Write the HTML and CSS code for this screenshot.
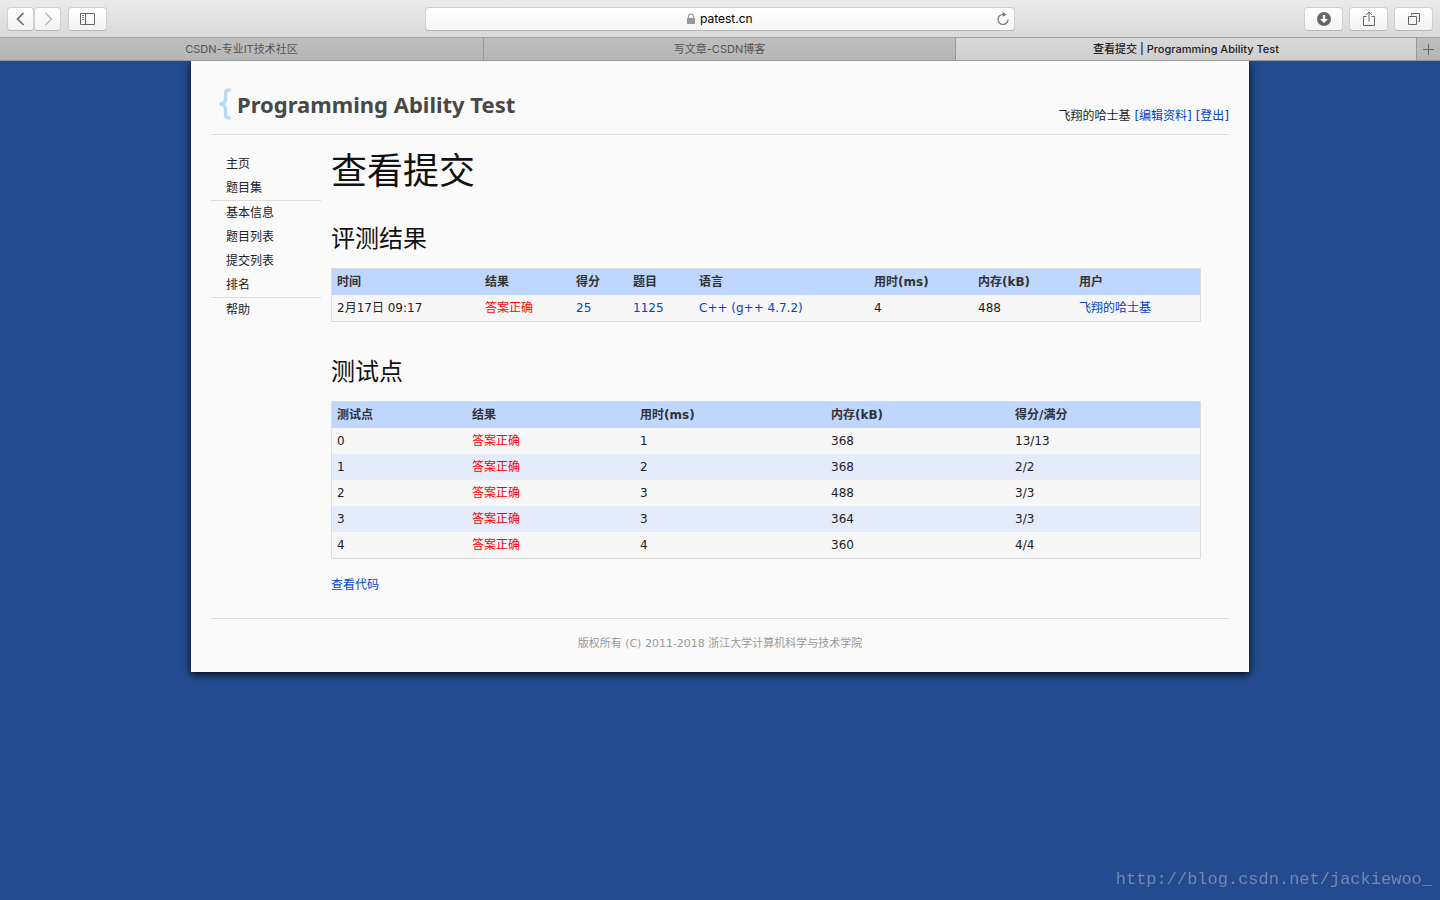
FILE: index.html
```html
<!DOCTYPE html>
<html lang="zh-CN">
<head>
<meta charset="utf-8">
<title>查看提交 | Programming Ability Test</title>
<link rel="stylesheet" href="styles.css">
</head>
<body>
<header class="browser">
  <div class="toolbar">
    <div class="tools">
      <div class="history">
        <button class="tool" type="button" aria-label="后退"><svg width="26" height="22" viewBox="0 0 26 22"><path d="M15.500 5L9.500 11l6 6" fill="none" stroke="#666" stroke-width="1.600"/></svg></button>
        <button class="tool" type="button" aria-label="前进"><svg width="26" height="22" viewBox="0 0 26 22"><path d="M10.500 5l6 6-6 6" fill="none" stroke="#bbb" stroke-width="1.600"/></svg></button>
      </div>
      <button class="tool wide" type="button" aria-label="边栏"><svg width="16" height="12" viewBox="0 0 16 12"><path d="M.5.500h14v11H.5zM5.500.500v11" fill="none" stroke="#666"/><path d="M2 2.500h2M2 4.500h2M2 6.500h2" stroke="#888"/></svg></button>
    </div>
    <form class="address">
      <div class="site">
        <svg width="10" height="12" viewBox="0 0 10 12"><rect x="1" y="5" width="8" height="6" rx=".5" fill="#999"/><path d="M2.500 5V3.500a2.500 2.500 0 0 1 5 0V5" fill="none" stroke="#999" stroke-width="1.200"/></svg>
        <input class="url" type="text" aria-label="网址" value="patest.cn">
      </div>
      <button class="reload" type="button" aria-label="重新载入"><svg width="14" height="14" viewBox="0 0 14 14"><path d="M7 2.500a5 5 0 1 0 5 5" fill="none" stroke="#777" stroke-width="1.200"/><path d="M6.500 0l4 2.500-4 2.500z" fill="#777"/></svg></button>
    </form>
    <div class="tools end">
      <button class="tool wide" type="button" aria-label="下载"><svg width="14" height="14" viewBox="0 0 14 14"><circle cx="7" cy="7" r="7" fill="#666"/><path d="M5.800 3h2.400v4H11l-4 4-4-4h2.800z" fill="#fff"/></svg></button>
      <button class="tool wide" type="button" aria-label="分享"><svg width="14" height="16" viewBox="0 0 14 16"><path d="M4.500 5.500h-3v9h11v-9h-3M7 10.500V1M4 4l3-3 3 3" fill="none" stroke="#666"/></svg></button>
      <button class="tool wide" type="button" aria-label="显示所有标签页"><svg width="14" height="14" viewBox="0 0 14 14"><path d="M1.500 4.500h8v8h-8zM4.500 3V1.500h8v8H11" fill="none" stroke="#666"/></svg></button>
    </div>
  </div>
  <nav class="tabs">
    <button class="tab" type="button">CSDN-专业IT技术社区</button>
    <button class="tab" type="button">写文章-CSDN博客</button>
    <button class="tab active" type="button">查看提交 | Programming Ability Test</button>
    <button class="tab add" type="button" aria-label="新标签页"><svg width="11" height="11" viewBox="0 0 11 11"><path d="M0 5.500h11M5.500 0v11" stroke="#666"/></svg></button>
  </nav>
</header>
<div class="page">
  <header class="head">
    <a class="logo" href="#"><svg width="12" height="32" viewBox="0 0 12 32"><path d="M11.500 2H10Q6.500 2 6.500 5.500V11Q6.500 16 .5 16q6 0 6 5v5.500Q6.500 30 10 30h1.500" fill="none" stroke="#b9dcf3" stroke-width="3.400"/></svg>Programming Ability Test</a>
    <div class="account">飞翔的哈士基 <a href="#">[编辑资料]</a> <a href="#">[登出]</a></div>
  </header>
  <div class="body">
    <nav class="side">
      <ul><li><a href="#">主页</a></li><li><a href="#">题目集</a></li></ul>
      <ul><li><a href="#">基本信息</a></li><li><a href="#">题目列表</a></li><li><a href="#">提交列表</a></li><li><a href="#">排名</a></li></ul>
      <ul><li><a href="#">帮助</a></li></ul>
    </nav>
    <main class="content">
      <h1>查看提交</h1>
      <h2>评测结果</h2>
      <table class="grid summary">
        <thead><tr><th class="c-time">时间</th><th class="c-result">结果</th><th class="c-score">得分</th><th class="c-problem">题目</th><th class="c-lang">语言</th><th class="c-used">用时(ms)</th><th class="c-memory">内存(kB)</th><th>用户</th></tr></thead>
        <tbody><tr><td>2月17日 09:17</td><td class="ok">答案正确</td><td><a href="#">25</a></td><td><a href="#">1125</a></td><td><a href="#">C++ (g++ 4.7.2)</a></td><td>4</td><td>488</td><td><a href="#">飞翔的哈士基</a></td></tr></tbody>
      </table>
      <h2>测试点</h2>
      <table class="grid cases">
        <thead><tr><th class="k-id">测试点</th><th class="k-result">结果</th><th class="k-used">用时(ms)</th><th class="k-memory">内存(kB)</th><th>得分/满分</th></tr></thead>
        <tbody>
          <tr><td>0</td><td class="ok">答案正确</td><td>1</td><td>368</td><td>13/13</td></tr>
          <tr><td>1</td><td class="ok">答案正确</td><td>2</td><td>368</td><td>2/2</td></tr>
          <tr><td>2</td><td class="ok">答案正确</td><td>3</td><td>488</td><td>3/3</td></tr>
          <tr><td>3</td><td class="ok">答案正确</td><td>3</td><td>364</td><td>3/3</td></tr>
          <tr><td>4</td><td class="ok">答案正确</td><td>4</td><td>360</td><td>4/4</td></tr>
        </tbody>
      </table>
      <p class="source"><a href="#">查看代码</a></p>
    </main>
  </div>
  <footer class="foot">版权所有 (C) 2011-2018 浙江大学计算机科学与技术学院</footer>
</div>
<div class="watermark">http://blog.csdn.net/jackiewoo_</div>
</body>
</html>
```
FILE: styles.css
```css
* { box-sizing: border-box; }
body {
  margin: 0;
  min-height: 100vh;
  background: #234b8f;
  color: #222;
  font: 12px/24px "DejaVu Sans", "Noto Sans CJK SC", sans-serif;
}
a { color: #04c; text-decoration: none; }
button, input { font: inherit; color: inherit; border: 0; padding: 0; background: none; }
svg { display: block; flex: none; }

.browser { font: 11px/20px Inter, "Noto Sans CJK SC", sans-serif; }
.toolbar {
  display: grid;
  grid-template-columns: 1fr 590px 1fr;
  align-items: center;
  height: 38px;
  padding: 0 7px;
  background: linear-gradient(#ebebeb, #d9d9d9);
  border-bottom: 1px solid #a4a4a4;
}
.tools { display: flex; gap: 7px; }
.tools.end { justify-content: flex-end; gap: 6px; }
.history { display: flex; }
.tool {
  display: flex;
  align-items: center;
  justify-content: center;
  width: 27px;
  height: 24px;
  border: 1px solid #cfcfcf;
  border-bottom-color: #b8b8b8;
  border-radius: 4px;
  background: linear-gradient(#fff, #f3f3f3);
}
.tool.wide { width: 39px; }
.address {
  display: flex;
  align-items: center;
  height: 24px;
  margin: 0;
  padding: 0 4px 0 20px;
  border: 1px solid #cfcfcf;
  border-bottom-color: #b8b8b8;
  border-radius: 4px;
  background: linear-gradient(#fff, #f6f6f6);
}
.site { display: flex; flex: 1; justify-content: center; align-items: center; gap: 4px; }
.url { width: 56px; color: #000; font-size: 12px; outline: 0; }
.reload { width: 14px; }
.tabs {
  display: grid;
  grid-template-columns: 484fr 472fr 461fr 23px;
  height: 23px;
  border-bottom: 1px solid #999;
}
.tab {
  overflow: hidden;
  white-space: nowrap;
  color: #555;
  background: linear-gradient(#bfbfbf, #b5b5b5);
  border-right: 1px solid #999;
}
.tab.active { color: #222; font-weight: 500; background: linear-gradient(#d9d9d9, #cfcfcf); }
.tab.add { display: flex; align-items: center; justify-content: center; border-right: 0; }

.page {
  max-width: 1058px;
  margin: 0 auto;
  padding: 0 20px 16px;
  background: #fafafa;
  box-shadow: 0 2px 8px #000;
  clip-path: inset(0 -12px -12px);
}
.head {
  display: flex;
  justify-content: space-between;
  align-items: flex-end;
  height: 74px;
  padding-bottom: 6px;
  border-bottom: 1px solid #ddd;
}
.logo {
  display: flex;
  align-items: center;
  gap: 6px;
  padding: 0 0 8px 8px;
  color: #484848;
  font: bold 22px/30px "Noto Sans", sans-serif;
}
.body { display: grid; grid-template-columns: 110px 1fr; gap: 10px; padding: 17px 28px 0 0; }
.side ul { margin: 0; padding: 0; list-style: none; }
.side ul + ul { border-top: 1px solid #ddd; }
.side a { display: block; padding-left: 15px; color: #222; }
h1, h2 { margin: 0; color: #111; font-weight: 400; }
h1 { font-size: 36px; line-height: 40px; }
h2 { margin: 31px 0 13px; font-size: 24px; line-height: 32px; }
.grid { width: 100%; table-layout: fixed; border-collapse: separate; border-spacing: 0; border: 1px solid #ddd; background: #f7f7f7; }
.grid + h2 { margin-top: 34px; }
th, td { height: 26px; padding: 1px 5px; text-align: left; white-space: nowrap; }
th { background: #bfd7ff; color: #333; }
.cases tbody tr:nth-child(even) { background: #e4ebfb; }
.ok { color: #f00; }
.c-time { width: 148px; }
.c-result { width: 91px; }
.c-score { width: 57px; }
.c-problem { width: 66px; }
.c-lang { width: 175px; }
.c-used { width: 104px; }
.c-memory { width: 101px; }
.k-id { width: 135px; }
.k-result { width: 168px; }
.k-used { width: 191px; }
.k-memory { width: 184px; }
.source { margin: 14px 0 21px; }
.foot { padding-top: 13px; border-top: 1px solid #ddd; color: #999; font-size: 11px; text-align: center; }
.watermark {
  position: fixed;
  right: 8px;
  bottom: 8px;
  color: #7288ae;
  font: 17px/24px "Liberation Mono", monospace;
}
```
